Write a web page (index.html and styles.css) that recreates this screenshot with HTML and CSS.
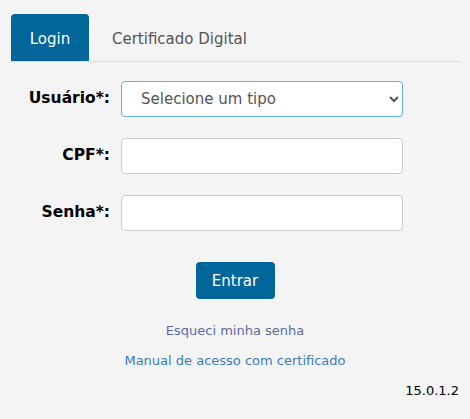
FILE: index.html
```html
<!DOCTYPE html>
<html lang="pt-BR">
<head>
    <meta charset="UTF-8">
    <meta name="viewport" content="width=device-width, initial-scale=1.0">
    <title>Acesso</title>
    <link rel="stylesheet" href="styles.css">
</head>
<body>
    <div class="tabs">
        <a class="tab active" href="#">Login</a>
        <a class="tab" href="#">Certificado Digital</a>
    </div>

    <form class="login-form" onsubmit="return false;">
        <div class="row">
            <label for="usuario">Usuário*:</label>
            <select id="usuario" class="field select-field">
                <option>Selecione um tipo</option>
            </select>
        </div>
        <div class="row">
            <label for="cpf">CPF*:</label>
            <input id="cpf" class="field" type="text">
        </div>
        <div class="row">
            <label for="senha">Senha*:</label>
            <input id="senha" class="field" type="password">
        </div>

        <div class="actions">
            <button type="submit" class="btn-entrar">Entrar</button>
        </div>
    </form>

    <div class="links">
        <a href="#" class="link visited">Esqueci minha senha</a>
        <a href="#" class="link">Manual de acesso com certificado</a>
    </div>

    <div class="version">15.0.1.2</div>
</body>
</html>
```

FILE: styles.css
```css
body {
    margin: 0;
    background-color: #f4f4f4;
    font-family: "DejaVu Sans", Verdana, sans-serif;
    color: #000;
}

.tabs {
    display: flex;
    margin: 14px 10px 0 11px;
    border-bottom: 1px solid #dcdcdc;
}

.tab {
    display: block;
    height: 47px;
    line-height: 50px;
    padding: 0 22px 0 23px;
    font-size: 15px;
    color: #555;
    text-decoration: none;
    border-radius: 4px 4px 0 0;
}

.tab.active {
    width: 78px;
    padding: 0;
    text-align: center;
    background-color: #03669a;
    color: #fff;
}

.login-form {
    margin-top: 19px;
}

.row {
    display: grid;
    grid-template-columns: 110px 282px;
    column-gap: 11px;
    align-items: center;
    margin-bottom: 21px;
}

.row label {
    text-align: right;
    font-weight: bold;
    font-size: 15.5px;
    margin-top: -3px;
}

.field {
    box-sizing: border-box;
    width: 282px;
    height: 36px;
    border: 1px solid #ccc;
    border-radius: 4px;
    background-color: #fff;
    font-family: inherit;
    font-size: 15px;
    color: #555;
    padding: 0 12px;
}

.select-field {
    border-color: #66afe9;
    padding-left: 15px;
}

.actions {
    display: flex;
    justify-content: center;
    margin-top: 31px;
}

.btn-entrar {
    width: 79px;
    height: 37px;
    border: none;
    border-radius: 4px;
    background-color: #03669a;
    color: #fff;
    font-family: inherit;
    font-size: 15px;
    cursor: pointer;
}

.links {
    display: flex;
    flex-direction: column;
    align-items: center;
    margin-top: 23px;
    gap: 12px;
}

.link {
    font-size: 13px;
    color: #3a7bbf;
    text-decoration: none;
    line-height: 18px;
}

.link.visited {
    color: #5b6aa8;
}

.version {
    text-align: right;
    font-size: 13px;
    margin: 13px 11px 0 0;
}
```
